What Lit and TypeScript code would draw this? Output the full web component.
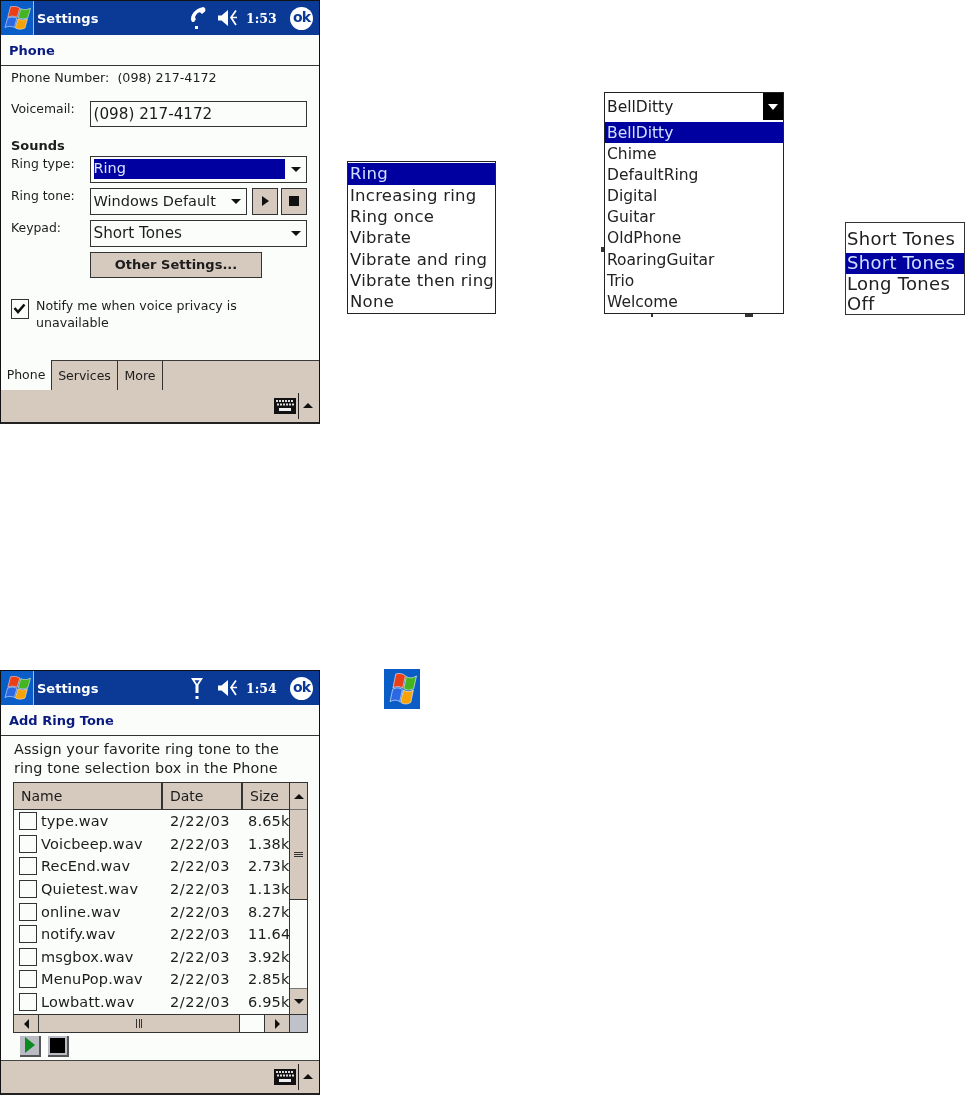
import { LitElement, html, css, svg } from "lit";
import { customElement } from "lit/decorators.js";

const flag = (cls: string) => html`<svg class=${cls} viewBox="0 0 28 24" preserveAspectRatio="none">
  <path d="M7.500 .8C10.800 -.2 14 .5 16.800 2L14.200 11.300C11 9.800 7.800 9.800 4.800 11.200Z" fill="#ea3f17" stroke="#fff" stroke-width=".5"/>
  <path d="M17.800 2.600C20.500 4 23.500 4 27.500 2.200L24.800 11.800C21.300 13.200 18.200 13 15.200 11.800Z" fill="#46b320" stroke="#fff" stroke-width=".5"/>
  <path d="M4.500 12.200C7.800 10.800 11 10.800 13.900 12.400L11.300 21.500C8.500 20 5.200 20 2 21.500Z" fill="#2a68e4" stroke="#fff" stroke-width=".5"/>
  <path d="M14.900 12.800C18 14.200 21.300 14.300 24.500 12.800L22 22C18.500 23.800 15 23.500 12.300 22Z" fill="#f7a205" stroke="#fff" stroke-width=".5"/>
</svg>`;

const phoneIcon = html`<svg class="sig" viewBox="0 0 18 24"><path d="M15.500 1C10 1.500 3.500 6.500 3 12.500C2.800 15.500 4.800 16.500 6 16L8 13C6.800 12 6.800 11 7.800 9.500C9 7.500 10.500 6.300 12 6.300L14 8L17 5.500C18 3.800 17.200 1.500 15.500 1Z" fill="#fff"/><rect x="7" y="20" width="3" height="3" fill="#fff"/></svg>`;
const antennaIcon = html`<svg class="sig" viewBox="0 0 18 24"><path d="M3 2H15L10.500 9V17H7.500V9ZM6.500 4.200L9 8L11.500 4.200Z" fill="#fff" fill-rule="evenodd"/><rect x="7.500" y="20" width="3" height="3" fill="#fff"/></svg>`;
const speakerIcon = html`<svg class="spk" viewBox="0 0 22 18"><path d="M0 6.500H3.500L10 1V17L3.500 11.500H0Z" fill="#fff"/><path d="M18 1.500L13 8.500L18 16M13.500 8.500H19" stroke="#fff" stroke-width="1.700" fill="none"/></svg>`;
const keyboard = html`<svg class="kbd" viewBox="0 0 22 16"><rect width="22" height="16" fill="#111"/>${[2, 5, 8, 11, 14, 17].map(x => svg`<rect x=${x} y="2" width="2" height="2" fill="#ddd"/><rect x=${x + 1} y="5.500" width="2" height="2" fill="#ddd"/>`)}<rect x="5" y="10" width="12" height="3" fill="#eee"/></svg>`;

const ringItems = ["Ring", "Increasing ring", "Ring once", "Vibrate", "Vibrate and ring", "Vibrate then ring", "None"];
const toneItems = ["BellDitty", "Chime", "DefaultRing", "Digital", "Guitar", "OldPhone", "RoaringGuitar", "Trio", "Welcome"];
const keyItems = ["Short Tones", "Long Tones", "Off"];
const files: [string, string][] = [
  ["type.wav", "8.65k"], ["Voicbeep.wav", "1.38k"], ["RecEnd.wav", "2.73k"],
  ["Quietest.wav", "1.13k"], ["online.wav", "8.27k"], ["notify.wav", "11.64"],
  ["msgbox.wav", "3.92k"], ["MenuPop.wav", "2.85k"], ["Lowbatt.wav", "6.95k"],
];

@customElement("app-root")
export class AppRoot extends LitElement {
  static styles = css`
    :host { display: block; position: relative; width: 965px; height: 1095px; overflow: hidden; background: #fff;
      font-family: "DejaVu Sans", sans-serif; color: #1c1c1c; font-size: 12px; }
    .abs { position: absolute; }
    .device { left: 0; width: 320px; box-sizing: border-box; display: flex; flex-direction: column; background: #fbfdfb;
      border-left: 1px solid #111; border-right: 1px solid #111; border-top: 1px solid #111; border-bottom: 2px solid #222; filter: blur(.3px); }
    .d1 { top: 0; height: 424px; }
    .d2 { top: 670px; height: 425px; }
    .title { height: 34px; flex: none; display: flex; align-items: center; background: #0a3a96; color: #fff; }
    .start { width: 32px; height: 34px; background: #0a5cc6; border-right: 1.500px solid #9cc0ea; display: flex; align-items: center; justify-content: center; flex: none; }
    .flag { width: 28px; height: 24px; }
    .apptitle { font-weight: 700; font-size: 13px; margin-left: 3px; flex: 1; }
    .sig { width: 18px; height: 24px; margin-right: 12px; }
    .spk { width: 22px; height: 18px; margin-right: 6px; }
    .time { font-weight: 700; font-size: 12.500px; width: 38px; font-family: "DejaVu Serif", "DejaVu Sans", serif; }
    .ok { width: 23px; height: 23px; border-radius: 50%; background: #fff; color: #0a3a96; font-weight: 700; font-size: 14px; line-height: 21px; text-align: center; margin: 0 6px 0 6px; letter-spacing: -1px; }
    .head { height: 30px; flex: none; box-sizing: content-box; padding-left: 8px; display: flex; align-items: center; color: #0a1a80; font-weight: 700; font-size: 13px; border-bottom: 1.500px solid #333; }
    .main { flex: 1; padding-left: 10px; display: flex; flex-direction: column; }
    .number { height: 24px; line-height: 24px; white-space: pre; margin-bottom: 10.500px; font-size: 12.700px; }
    .form { display: grid; grid-template-columns: 79px 217px; align-items: start; row-gap: 5px; }
    .lab { line-height: 16px; font-size: 12.400px; }
    .box { box-sizing: border-box; height: 26px; border: 1.500px solid #333; background: #fbfdfb; display: flex; align-items: center; padding-left: 2.500px; font-size: 14.500px; white-space: nowrap; }
    .box.wide { font-size: 15.200px; }
    .sounds { grid-column: 1 / 3; font-weight: 700; font-size: 13px; height: 19px; line-height: 19px; margin-top: 4px; margin-bottom: -4px; }
    .sel { justify-content: space-between; height: 27px; }
    .hl { background: #0000a0; color: #d9e4ff; flex: 1; height: 20px; line-height: 19px; margin-right: 6px; }
    .arrow { width: 0; height: 0; border-left: 5px solid transparent; border-right: 5px solid transparent; border-top: 5px solid #111; margin-right: 5px; flex: none; }
    .tone { display: flex; gap: 0; }
    .tone .box { width: 157px; }
    .pb { box-sizing: border-box; width: 26px; height: 27px; background: #d6c9be; border: 1.500px solid #333; margin-left: 5px; display: flex; align-items: center; justify-content: center; }
    .pb + .pb { margin-left: 3px; }
    .tri { width: 0; height: 0; border-top: 5.500px solid transparent; border-bottom: 5.500px solid transparent; border-left: 7px solid #111; }
    .sq { width: 10px; height: 10px; background: #111; }
    .other { grid-column: 2; box-sizing: border-box; width: 172px; height: 26px; background: #d6c9be; border: 1.500px solid #333; font-weight: 700; font-size: 13px; display: flex; align-items: center; justify-content: center; margin-top: 0; }
    .notify { display: flex; gap: 7px; margin-top: 19px; line-height: 17px; font-size: 12.600px; }
    .chk { box-sizing: border-box; width: 18px; height: 20px; border: 1.500px solid #333; margin-top: 2px; flex: none; }
    .chk svg { display: block; width: 15px; height: 17px; }
    .spacer { flex: 1; }
    .tabs { height: 30px; flex: none; display: flex; background: #d6c9be; border-top: 1.500px solid #3a3a3a; box-sizing: border-box; }
    .tab { box-sizing: border-box; height: 100%; display: flex; align-items: center; justify-content: center; border-right: 1.500px solid #333; font-size: 12.500px; }
    .tab.on { width: 51px; background: #fbfdfb; margin-top: -1.500px; height: 30px; }
    .tab.s { width: 66px; }
    .tab.m { width: 45px; }
    .bar { height: 32px; flex: none; background: #d6c9be; display: flex; align-items: center; justify-content: flex-end; }
    .bar.line { border-top: 1.500px solid #444; }
    .kbd { width: 22px; height: 16px; }
    .div { width: 1.500px; height: 26px; background: #222; margin: 0 4px 0 2px; }
    .up { width: 0; height: 0; border-left: 5px solid transparent; border-right: 5px solid transparent; border-bottom: 5px solid #111; margin: 0 6px 2px 0; }

    .pop { background: #fff; box-sizing: border-box; border: 1.500px solid #222; font-size: 15.500px; filter: blur(.25px); overflow: hidden; }
    .pop .it { height: 21.200px; line-height: 23px; padding-left: 2px; white-space: nowrap; color: #222; }
    .pop .sel-it { background: #0000a0; color: #cfe0ff; }
    .p1 { left: 347px; top: 161px; width: 149px; height: 153px; padding-top: 1px; font-size: 16.500px; letter-spacing: .25px; }
    .p1 .it { height: 21.400px; line-height: 22px; }
    .p1 .sel-it { height: 21.500px; }
    .p2 { left: 604px; top: 92px; width: 180px; height: 222px; }
    .combo { height: 27px; display: flex; justify-content: space-between; align-items: center; padding-left: 2px; margin-bottom: 1.500px; }
    .blackbtn { width: 20px; height: 27px; background: #000; display: flex; align-items: center; justify-content: center; }
    .blackbtn i { width: 0; height: 0; border-left: 5.500px solid transparent; border-right: 5.500px solid transparent; border-top: 6px solid #fff; }
    .p3 { left: 845px; top: 222px; width: 120px; height: 93px; border-top-width: 1px; border-color: #333; padding-top: 5px; font-size: 18px; letter-spacing: .3px; }
    .p3 .first { height: 25px; line-height: 22px; padding-left: 1px; }
    .p3 .it { height: 20.500px; line-height: 20px; padding-left: 1px; }

    .intro { box-sizing: content-box; padding: 4px 0 0 3px; font-size: 14.400px; line-height: 19px; height: 42px; white-space: nowrap; letter-spacing: .1px; }
    .list { box-sizing: border-box; width: 295px; height: 251px; margin-left: 2px; border: 1.500px solid #333; display: grid; grid-template-columns: 275px 1fr; grid-template-rows: 1fr 18px; }
    .cols { overflow: hidden; display: flex; flex-direction: column; }
    .hdr { display: grid; grid-template-columns: 149px 80px 46px; height: 26px; flex: none; background: #d6c9be; border-bottom: 1.500px solid #333; font-size: 14px; }
    .hdr span { border-right: 2px solid #333; line-height: 26px; padding-left: 7px; box-sizing: border-box; }
    .hdr span:last-child { border-right: 0; }
    .rows { flex: 1; display: grid; grid-auto-rows: 22.600px; font-size: 14.500px; padding-top: 0; }
    .row { display: grid; grid-template-columns: 27px 129px 78px 60px; align-items: center; white-space: nowrap; letter-spacing: .15px; }
    .date { letter-spacing: .6px; }
    .cb { box-sizing: border-box; width: 18px; height: 18px; border: 1.200px solid #333; margin-left: 5px; }
    .vs { display: flex; flex-direction: column; border-left: 1.500px solid #333; background: #fbfdfb; }
    .sb { background: #d6c9be; display: flex; align-items: center; justify-content: center; flex: none; }
    .vs .u { height: 26px; border-bottom: 1px solid #777; }
    .vs .th { height: 89px; border-bottom: 1.500px solid #333; flex-direction: column; gap: 1px; }
    .vs .th i { display: block; width: 9px; height: 1px; background: #333; }
    .vs .dn { height: 25px; margin-top: auto; border-top: 1px solid #777; }
    .ub { width: 0; height: 0; border-left: 5px solid transparent; border-right: 5px solid transparent; border-bottom: 5px solid #111; }
    .db { width: 0; height: 0; border-left: 5px solid transparent; border-right: 5px solid transparent; border-top: 5px solid #111; }
    .hs { display: flex; border-top: 1.500px solid #333; background: #fbfdfb; }
    .hs .b { width: 25px; border-right: 1.500px solid #333; box-sizing: border-box; }
    .hs .th { width: 201px; box-sizing: border-box; border-right: 1.500px solid #333; gap: 1.500px; }
    .hs .th i { display: block; width: 1px; height: 9px; background: #333; }
    .hs .w { flex: 1; }
    .hs .r { width: 25px; box-sizing: border-box; border-left: 1.500px solid #333; }
    .lt { width: 0; height: 0; border-top: 5px solid transparent; border-bottom: 5px solid transparent; border-right: 5px solid #111; }
    .rt { width: 0; height: 0; border-top: 5px solid transparent; border-bottom: 5px solid transparent; border-left: 5px solid #111; }
    .corner { background: #bfc2c8; border-top: 1.500px solid #333; border-left: 1.500px solid #333; }
    .media { display: flex; gap: 7px; padding: 2.500px 0 0 9px; flex: 1; }
    .mb { box-sizing: border-box; width: 21px; height: 21px; background: #b9bcc2; display: flex; align-items: center; justify-content: center; border-right: 2px solid #555; border-bottom: 2px solid #555; }
    .gtri { width: 0; height: 0; border-top: 8px solid transparent; border-bottom: 8px solid transparent; border-left: 10px solid #0a8a20; }
    .bsq { width: 15px; height: 15px; background: #000; }
    .logo { left: 384px; top: 669px; width: 36px; height: 40px; background: #0a5cc6; display: flex; align-items: center; justify-content: center; filter: blur(.3px); }
    .logo .flag { width: 29px; height: 32px; }
    .speck { background: #333; }
    .s1 { left: 601px; top: 247px; width: 3px; height: 5px; }
    .s2 { left: 651px; top: 314px; width: 2px; height: 3px; }
    .s3 { left: 745px; top: 314px; width: 8px; height: 3px; }
  `;

  private titleBar(icon: unknown, time: string) {
    return html`<div class="title">
      <div class="start">${flag("flag")}</div>
      <div class="apptitle">Settings</div>
      ${icon}${speakerIcon}
      <div class="time">${time}</div>
      <div class="ok">ok</div>
    </div>`;
  }

  private bottomBar(line = false) {
    return html`<div class="bar ${line ? "line" : ""}">${keyboard}<div class="div"></div><div class="up"></div></div>`;
  }

  render() {
    return html`
      <section class="abs device d1">
        ${this.titleBar(phoneIcon, "1:53")}
        <div class="head">Phone</div>
        <div class="main">
          <div class="number">Phone Number:  (098) 217-4172</div>
          <div class="form">
            <div class="lab">Voicemail:</div>
            <div class="box wide">(098) 217-4172</div>
            <div class="sounds">Sounds</div>
            <div class="lab">Ring type:</div>
            <div class="box sel"><div class="hl">Ring</div><div class="arrow"></div></div>
            <div class="lab">Ring tone:</div>
            <div class="tone">
              <div class="box sel">Windows Default<div class="arrow"></div></div>
              <div class="pb"><div class="tri"></div></div>
              <div class="pb"><div class="sq"></div></div>
            </div>
            <div class="lab">Keypad:</div>
            <div class="box sel wide">Short Tones<div class="arrow"></div></div>
            <div class="other">Other Settings...</div>
          </div>
          <div class="notify">
            <div class="chk"><svg viewBox="0 0 15 17"><path d="M2.500 8L6 12L12.500 4.500" fill="none" stroke="#111" stroke-width="2.600"/></svg></div>
            <div>Notify me when voice privacy is<br />unavailable</div>
          </div>
          <div class="spacer"></div>
        </div>
        <div class="tabs">
          <div class="tab on">Phone</div>
          <div class="tab s">Services</div>
          <div class="tab m">More</div>
        </div>
        ${this.bottomBar()}
      </section>

      <div class="abs pop p1">
        ${ringItems.map((t, i) => html`<div class="it ${i === 0 ? "sel-it" : ""}">${t}</div>`)}
      </div>

      <div class="abs pop p2">
        <div class="combo"><span>BellDitty</span><div class="blackbtn"><i></i></div></div>
        ${toneItems.map((t, i) => html`<div class="it ${i === 0 ? "sel-it" : ""}">${t}</div>`)}
      </div>
      <div class="abs speck s1"></div>
      <div class="abs speck s2"></div>
      <div class="abs speck s3"></div>

      <div class="abs pop p3">
        <div class="first">Short Tones</div>
        ${keyItems.map((t, i) => html`<div class="it ${i === 0 ? "sel-it" : ""}">${t}</div>`)}
      </div>

      <section class="abs device d2">
        ${this.titleBar(antennaIcon, "1:54")}
        <div class="head">Add Ring Tone</div>
        <div class="main">
          <div class="intro">Assign your favorite ring tone to the<br />ring tone selection box in the Phone</div>
          <div class="list">
            <div class="cols">
              <div class="hdr"><span>Name</span><span>Date</span><span>Size</span></div>
              <div class="rows">
                ${files.map(([n, s]) => html`<div class="row"><div class="cb"></div><div>${n}</div><div class="date">2/22/03</div><div>${s}</div></div>`)}
              </div>
            </div>
            <div class="vs">
              <div class="sb u"><div class="ub"></div></div>
              <div class="sb th"><i></i><i></i><i></i></div>
              <div class="sb dn"><div class="db"></div></div>
            </div>
            <div class="hs">
              <div class="sb b"><div class="lt"></div></div>
              <div class="sb th"><i></i><i></i><i></i></div>
              <div class="w"></div>
              <div class="sb r"><div class="rt"></div></div>
            </div>
            <div class="corner"></div>
          </div>
          <div class="media">
            <div class="mb"><div class="gtri"></div></div>
            <div class="mb"><div class="bsq"></div></div>
          </div>
        </div>
        ${this.bottomBar(true)}
      </section>

      <div class="abs logo">${flag("flag")}</div>
    `;
  }
}
